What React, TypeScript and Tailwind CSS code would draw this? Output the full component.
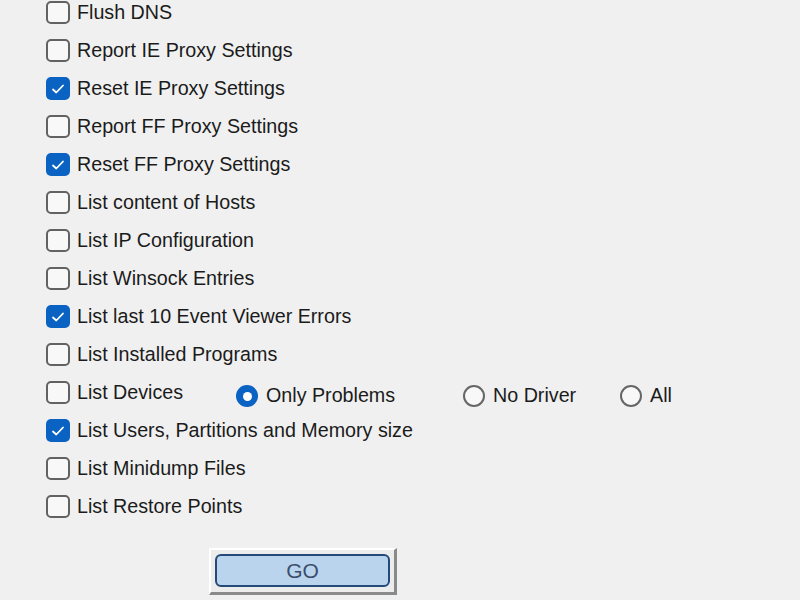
import React from 'react';

const items: { label: string; checked: boolean }[] = [
  { label: 'Flush DNS', checked: false },
  { label: 'Report IE Proxy Settings', checked: false },
  { label: 'Reset IE Proxy Settings', checked: true },
  { label: 'Report FF Proxy Settings', checked: false },
  { label: 'Reset FF Proxy Settings', checked: true },
  { label: 'List content of Hosts', checked: false },
  { label: 'List IP Configuration', checked: false },
  { label: 'List Winsock Entries', checked: false },
  { label: 'List last 10 Event Viewer Errors', checked: true },
  { label: 'List Installed Programs', checked: false },
];

const after: { label: string; checked: boolean }[] = [
  { label: 'List Users, Partitions and Memory size', checked: true },
  { label: 'List Minidump Files', checked: false },
  { label: 'List Restore Points', checked: false },
];

function Box({ checked }: { checked: boolean }) {
  if (checked) {
    return (
      <span className="w-[24px] h-[23px] rounded-[5px] bg-[#0a62c2] flex items-center justify-center shrink-0">
        <svg width="16" height="16" viewBox="0 0 16 16" fill="none">
          <path d="M3 8.5 L6.3 11.5 L13 4.5" stroke="white" strokeWidth="1.8" strokeLinecap="round" strokeLinejoin="round" />
        </svg>
      </span>
    );
  }
  return <span className="w-[24px] h-[23px] rounded-[5px] border-[2px] border-[#626262] bg-[#f8f8f8] shrink-0" />;
}

function Check({ label, checked }: { label: string; checked: boolean }) {
  return (
    <div className="flex items-center h-[23px]">
      <Box checked={checked} />
      <span className="ml-[7px] leading-none">{label}</span>
    </div>
  );
}

function Radio({ label, checked }: { label: string; checked: boolean }) {
  return (
    <div className="flex items-center">
      {checked ? (
        <span className="w-[22px] h-[22px] rounded-full bg-[#0a62c2] flex items-center justify-center shrink-0">
          <span className="w-[9px] h-[9px] rounded-full bg-white" />
        </span>
      ) : (
        <span className="w-[22px] h-[22px] rounded-full border-[2px] border-[#666666] bg-[#f8f8f8] shrink-0" />
      )}
      <span className="ml-[8px] leading-none">{label}</span>
    </div>
  );
}

export default function App() {
  return (
    <div
      className="w-[800px] h-[600px] bg-[#f0f0f0] text-[19.7px] text-[#1b1b1b] overflow-hidden"
      style={{ fontFamily: '"Liberation Sans", Arial, sans-serif' }}
    >
      <div className="pl-[46px] pt-[1px] flex flex-col gap-[15px]">
        {items.map(i => (
          <Check key={i.label} {...i} />
        ))}
        <div className="flex items-center h-[23px]">
          <div className="w-[190px]">
            <Check label="List Devices" checked={false} />
          </div>
          <div className="flex items-center mt-[7px]">
            <div className="w-[227px]"><Radio label="Only Problems" checked /></div>
            <div className="w-[157px]"><Radio label="No Driver" checked={false} /></div>
            <Radio label="All" checked={false} />
          </div>
        </div>
        {after.map(i => (
          <Check key={i.label} {...i} />
        ))}
      </div>
      <div className="pl-[209px] mt-[30px]">
        <div className="w-[188px] h-[47px] border-t-[2px] border-l-[2px] border-t-white border-l-white border-r-[3px] border-b-[3px] border-r-[#8a8a8a] border-b-[#8a8a8a] bg-[#ececec] flex items-center justify-center pb-[1px]">
          <div className="w-[175px] h-[33px] rounded-[6px] border-[2px] border-[#234a78] bg-[#bad4ee] flex items-center justify-center text-[#3a4e6c] text-[21px]">
            GO
          </div>
        </div>
      </div>
    </div>
  );
}
